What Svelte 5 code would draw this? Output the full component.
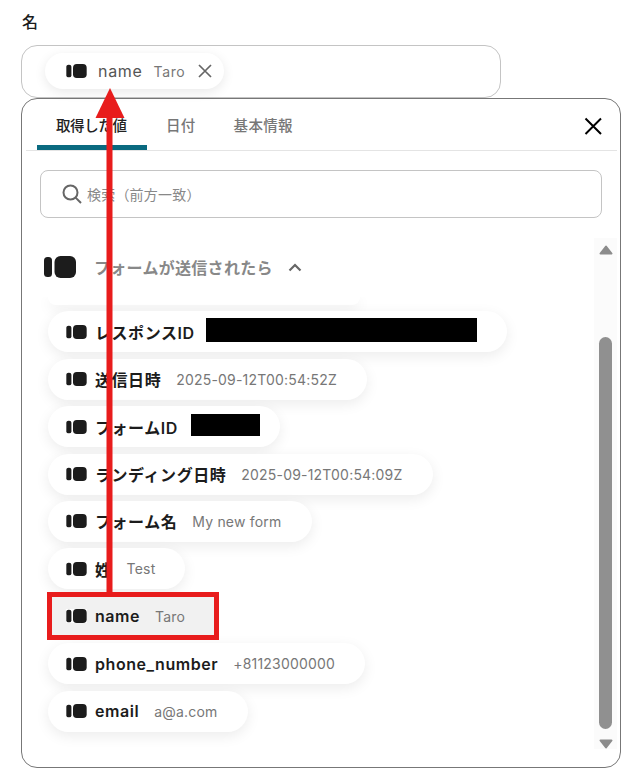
<script>
  const rows = [
    { key: 'レスポンスID', redact: 271, h: 24, gap: 11, pad: 30 },
    { key: '送信日時', value: '2025-09-12T00:54:52Z' },
    { key: 'フォームID', redact: 69, h: 22, gap: 13, pad: 20 },
    { key: 'ランディング日時', value: '2025-09-12T00:54:09Z' },
    { key: 'フォーム名', value: 'My new form' },
    { key: '姓', value: 'Test' },
    { key: 'name', value: 'Taro', selected: true },
    { key: 'phone_number', value: '+81123000000' },
    { key: 'email', value: 'a@a.com' },
  ];
  const tabs = ['取得した値', '日付', '基本情報'];
</script>

{#snippet logo(w, h)}
  <svg class="logo" width={w} height={h} viewBox="0 0 32 22" aria-hidden="true">
    <rect x="0" y="1" width="8" height="20" rx="3.5" fill="#1c1c1c" />
    <rect x="10.5" y="0" width="21.5" height="22" rx="6" fill="#1c1c1c" />
  </svg>
{/snippet}

<div class="page">
  <div class="label">名</div>
  <div class="field">
    <div class="chip">
      {@render logo(21, 14)}
      <span class="chip-key">name</span>
      <span class="chip-value">Taro</span>
      <svg class="chip-x" width="16" height="16" viewBox="0 0 16 16" aria-hidden="true">
        <path d="M2 2 L14 14 M14 2 L2 14" stroke="#666" stroke-width="1.7" fill="none" />
      </svg>
    </div>
  </div>

  <div class="popup">
    <div class="tabs">
      {#each tabs as tab, i}
        <div class="tab" class:active={i === 0}>{tab}</div>
      {/each}
      <svg class="close" width="20" height="20" viewBox="0 0 20 20" aria-hidden="true">
        <path d="M2.5 2.5 L18 18 M18 2.5 L2.5 18" stroke="#000" stroke-width="2" fill="none" />
      </svg>
    </div>

    <div class="search">
      <svg width="20" height="20" viewBox="0 0 20 20" aria-hidden="true">
        <circle cx="8.5" cy="8.5" r="7" stroke="#666" stroke-width="2" fill="none" />
        <path d="M13.6 13.6 L19 19" stroke="#666" stroke-width="2" fill="none" />
      </svg>
      <span>検索（前方一致）</span>
    </div>

    <div class="section">
      {@render logo(32, 22)}
      <span class="section-title">フォームが送信されたら</span>
      <svg width="14" height="9" viewBox="0 0 14 9" aria-hidden="true">
        <path d="M1.5 7.5 L7 2 L12.5 7.5" stroke="#666" stroke-width="2.2" fill="none" />
      </svg>
    </div>

    <div class="list-wrap">
      <div class="list">
        <div class="pill cut"></div>
        {#each rows as row}
          <div class="pill" class:selected={row.selected} style={row.pad ? `padding-right:${row.pad}px` : undefined}>
            <span class="pill-logo">{@render logo(21, 14)}</span>
            <span class="key">{row.key}</span>
            {#if row.redact}
              <span class="redact" style="width:{row.redact}px; height:{row.h}px; margin-left:{row.gap}px"></span>
            {:else}
              <span class="value">{row.value}</span>
            {/if}
          </div>
        {/each}
      </div>
      <div class="scrollbar">
        <svg class="arrow" width="14" height="10" viewBox="0 0 14 10" aria-hidden="true">
          <polygon points="7,1.5 12.5,8.5 1.5,8.5" fill="#8c8c8c" stroke="#8c8c8c" stroke-width="2" stroke-linejoin="round" />
        </svg>
        <span class="track"><span class="thumb"></span></span>
        <svg class="arrow" width="14" height="10" viewBox="0 0 14 10" aria-hidden="true">
          <polygon points="7,8.5 12.5,1.5 1.5,1.5" fill="#8c8c8c" stroke="#8c8c8c" stroke-width="2" stroke-linejoin="round" />
        </svg>
      </div>
    </div>
  </div>

  <!-- red annotation drawn over the screenshot -->
  <svg class="annotation" width="624" height="769" viewBox="0 0 624 769" aria-hidden="true">
    <path d="M109.5 592 V116" stroke="#e81c1c" stroke-width="6" fill="none" />
    <polygon points="110,88 124.5,118 95.5,118" fill="#e81c1c" />
    <rect x="49.5" y="594.5" width="167" height="43" stroke="#e81c1c" stroke-width="5" fill="none" />
  </svg>
</div>

<style>
  :global(body) {
    margin: 0;
    background: #fff;
  }

  .page {
    position: relative;
    width: 624px;
    height: 769px;
    overflow: hidden;
    box-sizing: border-box;
    padding: 12px 3px 0 21px;
    font-family: Inter, "Noto Sans CJK JP", sans-serif;
    color: #1c1c1c;
  }

  .label {
    height: 33px;
    padding-left: 1px;
    font-size: 16px;
    line-height: 20px;
    font-weight: 500;
  }

  .field {
    box-sizing: border-box;
    width: 480px;
    height: 53px;
    border: 1px solid #c4c4c4;
    border-radius: 16px;
    padding: 7px 0 0 23px;
  }

  .chip {
    display: inline-flex;
    align-items: center;
    height: 36px;
    width: 179px;
    box-sizing: border-box;
    padding-left: 21px;
    border-radius: 18px;
    background: #fff;
    box-shadow: 0 3px 12px rgba(0, 0, 0, 0.09);
  }

  .chip-key {
    margin-left: 11px;
    font-size: 16px;
    letter-spacing: 0.7px;
    color: #555;
  }

  .chip-value {
    margin-left: 11px;
    font-size: 14px;
    letter-spacing: 0.6px;
    color: #777;
  }

  .chip-x {
    margin-left: 12px;
  }

  .popup {
    box-sizing: border-box;
    width: 600px;
    height: 670px;
    border: 1px solid #777;
    border-radius: 16px;
    background: #fff;
  }

  .tabs {
    position: relative;
    display: flex;
    height: 51px;
    margin: 0 3px 0 4px;
    padding-left: 11px;
    border-bottom: 1px solid #e4e4e4;
  }

  .tab {
    box-sizing: border-box;
    height: 51px;
    padding: 17px 19px 0;
    white-space: nowrap;
    font-size: 14.5px;
    line-height: 20px;
    font-weight: 500;
    color: #777;
    letter-spacing: 0.3px;
  }

  .tab.active {
    width: 110px;
    letter-spacing: -0.4px;
    color: #222;
    border-bottom: 5px solid #0a6a80;
    border-radius: 5px 5px 0 0;
  }

  .close {
    position: absolute;
    right: 14px;
    top: 17px;
  }

  .search {
    display: flex;
    align-items: center;
    gap: 5px;
    box-sizing: border-box;
    width: 562px;
    height: 48px;
    margin: 19px 0 0 18px;
    padding-left: 21px;
    border: 1px solid #c4c4c4;
    border-radius: 8px;
    font-size: 14px;
    letter-spacing: 0.2px;
    color: #888;
  }

  .section {
    display: flex;
    align-items: center;
    height: 22px;
    margin: 38px 0 0 22px;
  }

  .section-title {
    margin: 0 15px 0 18px;
    font-size: 16px;
    letter-spacing: 0.3px;
    font-weight: 700;
    color: #888;
  }

  .list-wrap {
    position: relative;
    margin-top: 19px;
  }

  .list {
    display: flex;
    flex-direction: column;
    align-items: flex-start;
    gap: 6.4px;
    height: 470px;
    overflow: hidden;
    padding-left: 26px;
    box-sizing: border-box;
  }

  .pill {
    flex: none;
    display: flex;
    align-items: center;
    box-sizing: border-box;
    height: 41px;
    padding: 0 30px 0 18px;
    border-radius: 21px;
    background: #fff;
    box-shadow: 0 4px 14px rgba(0, 0, 0, 0.08);
    white-space: nowrap;
  }

  .pill.cut {
    width: 312px;
    height: 8px;
    border-radius: 0 0 21px 21px;
  }

  .pill.selected {
    width: 166px;
    border-radius: 0;
    background: #f1f1f1;
    box-shadow: none;
  }

  .pill-logo {
    display: flex;
    margin-right: 8px;
  }

  .selected .pill-logo {
    background: #fff;
  }

  .key {
    font-size: 16px;
    letter-spacing: 0.55px;
    font-weight: 600;
    color: #1c1c1c;
  }

  .value {
    margin-left: 15px;
    font-size: 14px;
    letter-spacing: 0.2px;
    color: #777;
  }

  .redact {
    margin-bottom: 4px;
    background: #000;
  }

  .scrollbar {
    position: absolute;
    right: 3px;
    top: -59px;
    bottom: 18px;
    width: 23px;
    display: flex;
    flex-direction: column;
    align-items: center;
    background: #fbfbfb;
  }

  .arrow {
    flex: none;
  }

  .arrow:first-child {
    margin-top: 7px;
  }

  .track {
    flex: 1;
    width: 13px;
    padding-top: 82px;
    padding-bottom: 10px;
    display: flex;
  }

  .thumb {
    width: 13px;
    border-radius: 7px;
    background: #909090;
  }

  .annotation {
    position: absolute;
    left: 0;
    top: 0;
    pointer-events: none;
  }
</style>
